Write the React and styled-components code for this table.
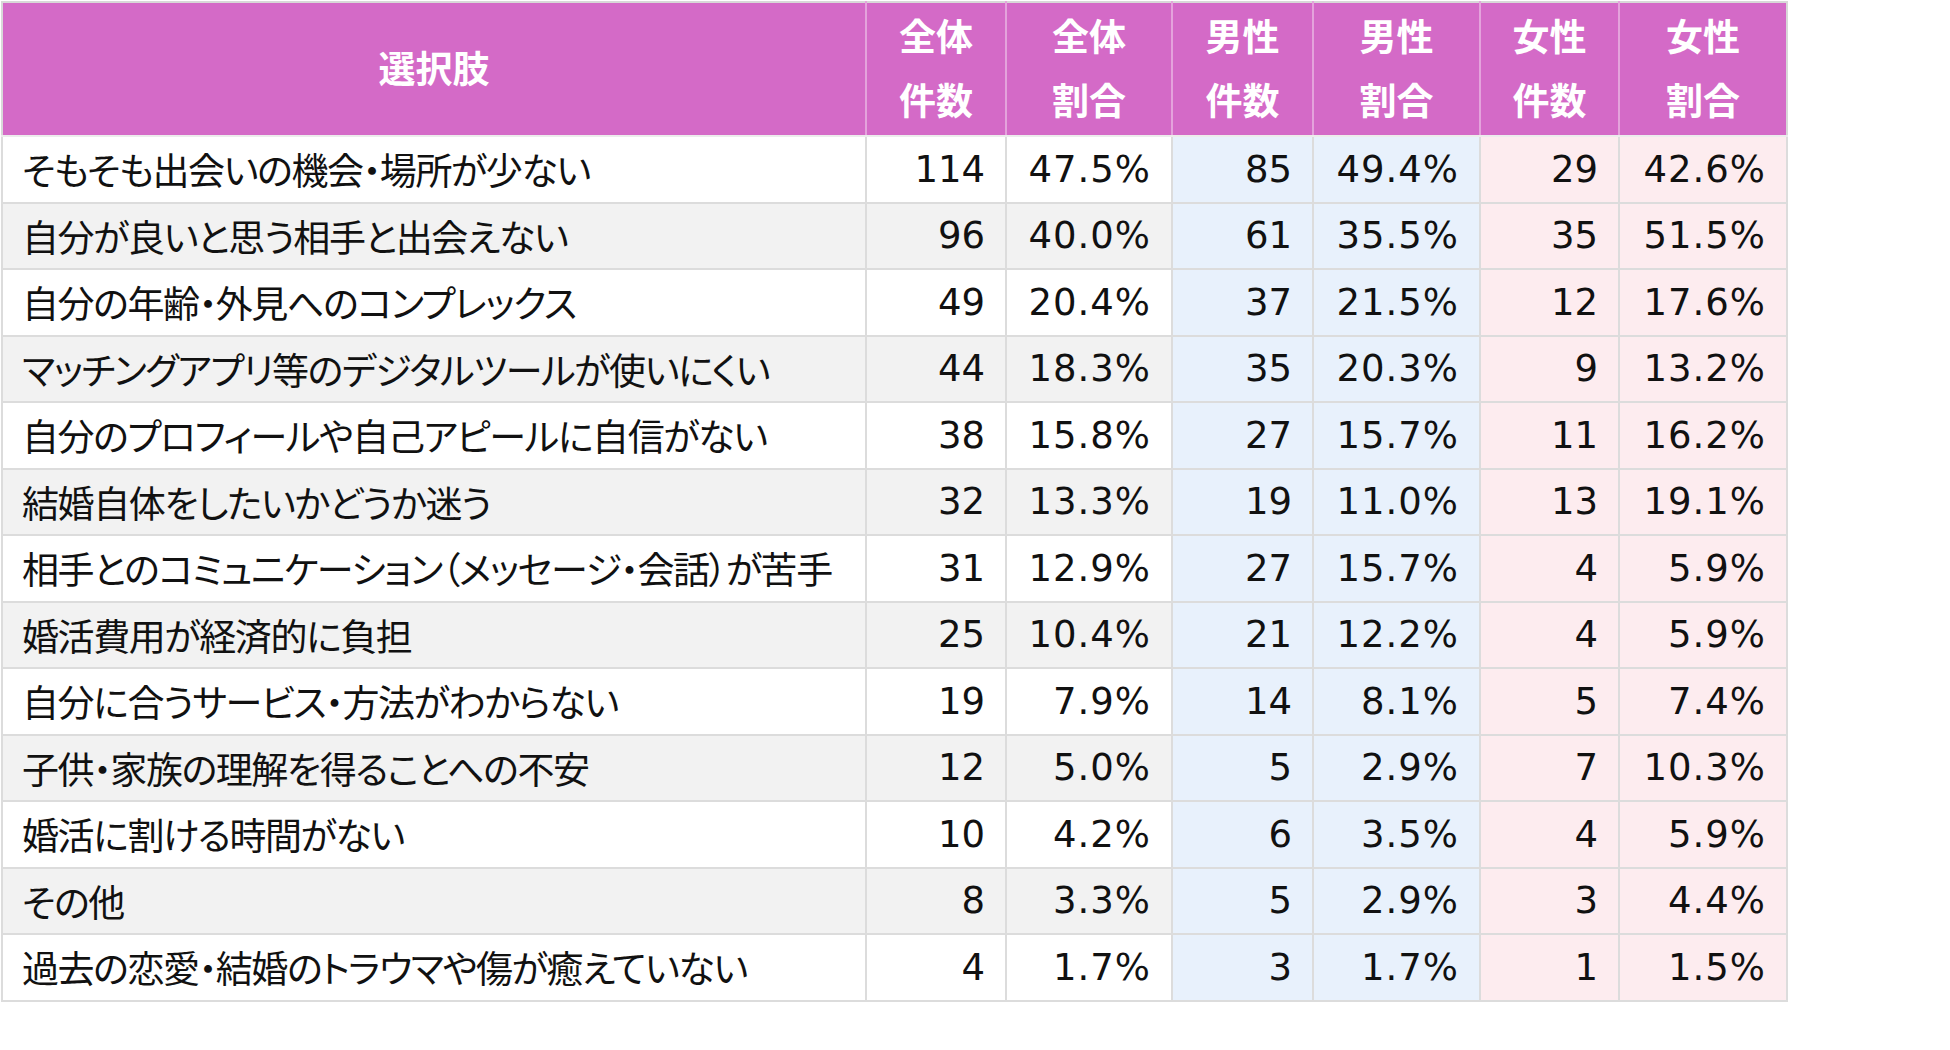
import React from "react";
import styled, { createGlobalStyle } from "styled-components";

const GlobalStyle = createGlobalStyle`
  html, body {
    margin: 0;
    padding: 0;
    background: #ffffff;
  }
`;

const Page = styled.div`
  padding: 1px 0 0 1px;
  width: 1950px;
  height: 1050px;
  box-sizing: border-box;
`;

const Table = styled.table`
  border-collapse: collapse;
  table-layout: fixed;
  width: 1785px;
  font-family: "Noto Sans CJK JP", "Noto Sans", sans-serif;
  color: #111111;
`;

const HeadCell = styled.th`
  background: #d46ac7;
  color: #ffffff;
  font-size: 37px;
  font-weight: 700;
  line-height: 64px;
  height: 126px;
  padding: 0 0 4px;
  text-align: center;
  border: 2px solid #e4a3dc;
  border-top-color: #d8d8d8;
  border-bottom-color: #ececec;
  &:first-child {
    border-left-color: #d8d8d8;
  }
  &:last-child {
    border-right-color: #d8d8d8;
  }
`;

const tones = {
  plain: ["#ffffff", "#f2f2f2"],
  male: ["#e8f1fc", "#e8f1fc"],
  female: ["#fdecef", "#fdecef"],
};

const Row = styled.tr`
  height: 66.5px;
`;

const LabelCell = styled.td`
  background: ${(p) => tones.plain[p.$alt ? 1 : 0]};
  border: 2px solid #dcdcdc;
  padding: 0 0 0 19px;
  font-size: 37px;
  letter-spacing: -1.4px;
  font-feature-settings: "palt";
  white-space: nowrap;
  vertical-align: middle;
`;

const NumCell = styled.td`
  background: ${(p) => tones[p.$tone][p.$alt ? 1 : 0]};
  border: 2px solid #dcdcdc;
  padding: 0 20px 0 0;
  text-align: right;
  font-family: "DejaVu Sans", "Noto Sans", sans-serif;
  font-size: 37px;
  white-space: nowrap;
  vertical-align: middle;
`;

const Percent = styled.span`
  letter-spacing: 1px;
`;

const columns = [
  { top: "全体", bottom: "件数", width: 140, tone: "plain" },
  { top: "全体", bottom: "割合", width: 166, tone: "plain" },
  { top: "男性", bottom: "件数", width: 141, tone: "male" },
  { top: "男性", bottom: "割合", width: 167, tone: "male" },
  { top: "女性", bottom: "件数", width: 139, tone: "female" },
  { top: "女性", bottom: "割合", width: 168, tone: "female" },
];

const rows = [
  ["そもそも出会いの機会・場所が少ない", 114, "47.5%", 85, "49.4%", 29, "42.6%"],
  ["自分が良いと思う相手と出会えない", 96, "40.0%", 61, "35.5%", 35, "51.5%"],
  ["自分の年齢・外見へのコンプレックス", 49, "20.4%", 37, "21.5%", 12, "17.6%"],
  ["マッチングアプリ等のデジタルツールが使いにくい", 44, "18.3%", 35, "20.3%", 9, "13.2%"],
  ["自分のプロフィールや自己アピールに自信がない", 38, "15.8%", 27, "15.7%", 11, "16.2%"],
  ["結婚自体をしたいかどうか迷う", 32, "13.3%", 19, "11.0%", 13, "19.1%"],
  ["相手とのコミュニケーション（メッセージ・会話）が苦手", 31, "12.9%", 27, "15.7%", 4, "5.9%"],
  ["婚活費用が経済的に負担", 25, "10.4%", 21, "12.2%", 4, "5.9%"],
  ["自分に合うサービス・方法がわからない", 19, "7.9%", 14, "8.1%", 5, "7.4%"],
  ["子供・家族の理解を得ることへの不安", 12, "5.0%", 5, "2.9%", 7, "10.3%"],
  ["婚活に割ける時間がない", 10, "4.2%", 6, "3.5%", 4, "5.9%"],
  ["その他", 8, "3.3%", 5, "2.9%", 3, "4.4%"],
  ["過去の恋愛・結婚のトラウマや傷が癒えていない", 4, "1.7%", 3, "1.7%", 1, "1.5%"],
];

const App = () => (
  <Page>
    <GlobalStyle />
    <Table>
      <colgroup>
        <col style={{ width: 864 }} />
        {columns.map((c, i) => (
          <col key={i} style={{ width: c.width }} />
        ))}
      </colgroup>
      <thead>
        <tr>
          <HeadCell>選択肢</HeadCell>
          {columns.map((c, i) => (
            <HeadCell key={i}>
              {c.top}
              <br />
              {c.bottom}
            </HeadCell>
          ))}
        </tr>
      </thead>
      <tbody>
        {rows.map(([label, ...values], r) => (
          <Row key={r}>
            <LabelCell $alt={r % 2 === 1}>{label}</LabelCell>
            {values.map((v, i) => (
              <NumCell key={i} $tone={columns[i].tone} $alt={r % 2 === 1}>
                {typeof v === "string" ? <Percent>{v}</Percent> : v}
              </NumCell>
            ))}
          </Row>
        ))}
      </tbody>
    </Table>
  </Page>
);

export default App;
